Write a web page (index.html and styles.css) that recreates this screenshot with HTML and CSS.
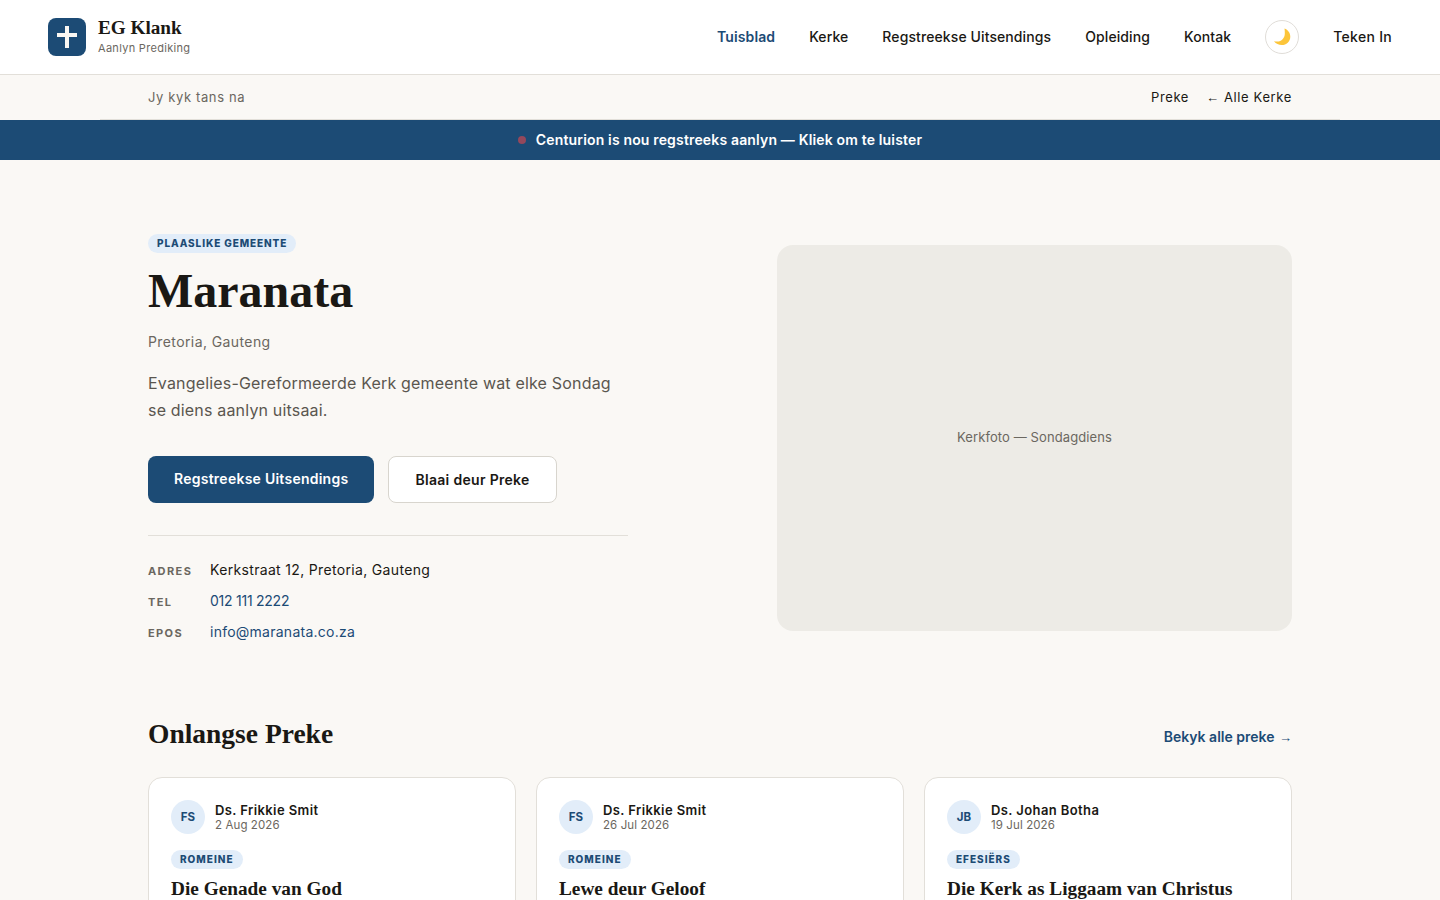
FILE: index.html
```html
<!DOCTYPE html>
<html lang="af">
<head>
  <meta charset="UTF-8">
  <meta name="viewport" content="width=device-width, initial-scale=1.0">
  <title>EG Klank - Maranata</title>
  <link rel="stylesheet" href="styles.css">
</head>
<body>

<header class="site-header">
  <a class="brand" href="#">
    <span class="brand-mark">
      <svg width="22" height="24" viewBox="0 0 22 24"><path d="M9 1h4v7h8v4h-8v11H9V12H1V8h8z" fill="#f9f7f3"/></svg>
    </span>
    <span class="brand-text">
      <span class="brand-name">EG Klank</span>
      <span class="brand-sub">Aanlyn Prediking</span>
    </span>
  </a>
  <nav class="main-nav">
    <a class="active" href="#">Tuisblad</a>
    <a href="#">Kerke</a>
    <a href="#">Regstreekse Uitsendings</a>
    <a href="#">Opleiding</a>
    <a href="#">Kontak</a>
    <button class="theme-btn" type="button" aria-label="Donker modus">
      <svg width="18" height="18" viewBox="0 0 18 18"><path d="M11.500 0.500C15 1.800 17.300 5 17.300 8.700C17.300 13.500 13.400 17 8.800 17C5.800 17 3 15.700 1 13.200C2.200 13.500 3.200 13.600 4.200 13.600C8.500 13.600 11.800 10 11.800 5.800C11.800 4 11.800 2.100 11.500 0.500Z" fill="#fcc53a"/></svg>
    </button>
    <a class="login-link" href="#">Teken In</a>
  </nav>
</header>

<div class="crumb-bar">
  <span class="crumb-label">Jy kyk tans na</span>
  <div class="crumb-links">
    <a href="#">Preke</a>
    <a href="#"><span class="arrow">←</span> Alle Kerke</a>
  </div>
</div>

<a class="live-banner" href="#">
  <span class="live-dot"></span>
  Centurion is nou regstreeks aanlyn — Kliek om te luister
</a>

<main class="content">
  <section class="hero">
    <div class="hero-info">
      <span class="pill pill-wide">PLAASLIKE GEMEENTE</span>
      <h1>Maranata</h1>
      <p class="location">Pretoria, Gauteng</p>
      <p class="intro">Evangelies-Gereformeerde Kerk gemeente wat elke Sondag se diens aanlyn uitsaai.</p>
      <div class="hero-actions">
        <a class="btn btn-primary" href="#">Regstreekse Uitsendings</a>
        <a class="btn btn-outline" href="#">Blaai deur Preke</a>
      </div>
      <dl class="details">
        <div class="detail-row">
          <dt>ADRES</dt>
          <dd>Kerkstraat 12, Pretoria, Gauteng</dd>
        </div>
        <div class="detail-row">
          <dt>TEL</dt>
          <dd><a class="phone" href="#">012 111 2222</a></dd>
        </div>
        <div class="detail-row">
          <dt>EPOS</dt>
          <dd><a href="#">info@maranata.co.za</a></dd>
        </div>
      </dl>
    </div>
    <div class="hero-photo">Kerkfoto — Sondagdiens</div>
  </section>

  <section class="sermons">
    <div class="section-head">
      <h2>Onlangse Preke</h2>
      <a href="#">Bekyk alle preke <span class="arrow">→</span></a>
    </div>
    <div class="sermon-grid">
      <article class="sermon-card">
        <div class="preacher">
          <span class="avatar">FS</span>
          <div>
            <div class="preacher-name">Ds. Frikkie Smit</div>
            <div class="sermon-date">2 Aug 2026</div>
          </div>
        </div>
        <span class="pill">ROMEINE</span>
        <h3>Die Genade van God</h3>
      </article>
      <article class="sermon-card">
        <div class="preacher">
          <span class="avatar">FS</span>
          <div>
            <div class="preacher-name">Ds. Frikkie Smit</div>
            <div class="sermon-date">26 Jul 2026</div>
          </div>
        </div>
        <span class="pill">ROMEINE</span>
        <h3>Lewe deur Geloof</h3>
      </article>
      <article class="sermon-card">
        <div class="preacher">
          <span class="avatar">JB</span>
          <div>
            <div class="preacher-name">Ds. Johan Botha</div>
            <div class="sermon-date">19 Jul 2026</div>
          </div>
        </div>
        <span class="pill">EFESIËRS</span>
        <h3>Die Kerk as Liggaam van Christus</h3>
      </article>
    </div>
  </section>
</main>

</body>
</html>
```

FILE: styles.css
```css
html, body {
  height: 900px;
  overflow: hidden;
}
body {
  margin: 0;
  background-color: #faf8f5;
  color: #1a1814;
  font-family: "Inter", "Open Sans", sans-serif;
}
a {
  color: inherit;
  text-decoration: none;
}

/* header */
.site-header {
  display: flex;
  justify-content: space-between;
  align-items: center;
  height: 74px;
  padding: 0 48px;
  background-color: #fff;
  border-bottom: 1px solid #e2dfd9;
}
.brand {
  display: flex;
  align-items: center;
  gap: 12px;
}
.brand-mark {
  display: flex;
  justify-content: center;
  align-items: center;
  width: 38px;
  height: 38px;
  border-radius: 8px;
  background-color: #1c4b75;
}
.brand-text {
  display: flex;
  flex-direction: column;
  margin-top: -2px;
}
.brand-name {
  font-family: "Liberation Serif", serif;
  font-size: 19.200px;
  font-weight: bold;
  line-height: 24px;
}
.brand-sub {
  padding-top: 1px;
  font-size: 11px;
  line-height: 15px;
  letter-spacing: 0.3px;
  color: #6b6760;
}
.main-nav {
  display: flex;
  align-items: center;
  gap: 34px;
  font-size: 14px;
  font-weight: 500;
  letter-spacing: 0.1px;
}
.main-nav a {
  margin-top: -2px;
}
.main-nav .active {
  color: #1c4b75;
  font-weight: 600;
}
.main-nav .login-link {
  letter-spacing: 0.3px;
}
.theme-btn {
  display: flex;
  justify-content: center;
  align-items: center;
  width: 34px;
  height: 34px;
  padding: 0;
  background-color: #fff;
  border: 1px solid #e0ddd8;
  border-radius: 50%;
}

/* breadcrumb */
.crumb-bar {
  display: flex;
  justify-content: space-between;
  align-items: center;
  height: 44px;
  margin: 0 100px;
  padding: 0 48px;
  border-bottom: 1px solid #e2dfd9;
  font-size: 13px;
  letter-spacing: 0.62px;
}
.crumb-label {
  color: #6b6760;
}
.crumb-links {
  display: flex;
  gap: 17px;
}
.arrow {
  font-family: "Liberation Sans", sans-serif;
  font-size: 13px;
  font-weight: normal;
}

/* live banner */
.live-banner {
  display: flex;
  justify-content: center;
  align-items: center;
  gap: 10px;
  box-sizing: border-box;
  height: 40px;
  padding-bottom: 2px;
  background-color: #1c4b75;
  color: #fff;
  font-size: 14px;
  font-weight: 600;
  letter-spacing: 0.16px;
}
.live-dot {
  width: 8px;
  height: 8px;
  margin-top: 2px;
  border-radius: 50%;
  background-color: #94485c;
}

/* hero */
.content {
  width: 1144px;
  margin: 0 auto;
}
.hero {
  display: grid;
  grid-template-columns: 565px 515px;
  gap: 64px;
  padding-top: 74px;
}
.hero-info {
  max-width: 480px;
}
.pill {
  display: block;
  width: fit-content;
  padding: 0 9px;
  border-radius: 10px;
  background-color: #e2edf9;
  color: #1c4b75;
  font-size: 10px;
  font-weight: 800;
  line-height: 19px;
  letter-spacing: 1px;
}
.pill-wide {
  letter-spacing: 0.9px;
}
h1 {
  margin: 9px 0 0;
  font-family: "Liberation Serif", serif;
  font-size: 48px;
  font-weight: bold;
  line-height: 58px;
}
.location {
  margin: 12px 0 0;
  font-size: 14px;
  line-height: 20px;
  letter-spacing: 0.4px;
  color: #6b6760;
}
.intro {
  margin: 18px 0 0;
  font-size: 16px;
  line-height: 27px;
  letter-spacing: 0.18px;
  color: #5a564f;
}
.hero-actions {
  display: flex;
  gap: 14px;
  margin-top: 32px;
}
.btn {
  display: flex;
  align-items: center;
  box-sizing: border-box;
  height: 47px;
  border-radius: 8px;
  font-size: 14px;
  font-weight: 600;
}
.btn-primary {
  padding: 0 26px 3px;
  background-color: #1c4b75;
  color: #fff;
  letter-spacing: 0.25px;
}
.btn-outline {
  padding: 0 26px 1px;
  background-color: #fff;
  border: 1px solid #d8d5ce;
  letter-spacing: 0.31px;
}
.details {
  margin: 32px 0 0;
  padding-top: 18px;
  border-top: 1px solid #e2dfd9;
}
.detail-row {
  display: flex;
  align-items: center;
  height: 31px;
}
.detail-row dt {
  width: 62px;
  padding-top: 2px;
  font-size: 11px;
  font-weight: 700;
  letter-spacing: 1.400px;
  color: #6b6760;
}
.detail-row dd {
  margin: 0;
  font-size: 14px;
  letter-spacing: 0.33px;
}
.detail-row dd a {
  color: #1c4b75;
  letter-spacing: 0.25px;
}
.detail-row dd .phone {
  letter-spacing: -0.25px;
}
.hero-photo {
  display: flex;
  justify-content: center;
  align-items: center;
  box-sizing: border-box;
  height: 386px;
  margin-top: 11px;
  padding-bottom: 2px;
  border-radius: 16px;
  background-color: #edebe6;
  color: #6b6760;
  font-size: 13px;
  letter-spacing: 0.1px;
}

/* recent sermons */
.sermons {
  margin-top: 68px;
}
.section-head {
  display: flex;
  justify-content: space-between;
  align-items: center;
  height: 36px;
  margin-bottom: 26px;
}
.section-head h2 {
  margin: 0;
  padding-top: 2px;
  font-family: "Liberation Serif", serif;
  font-size: 27.500px;
  font-weight: bold;
}
.section-head a {
  margin-top: 6px;
  color: #1c4b75;
  font-size: 14px;
  font-weight: 600;
}
.section-head .arrow {
  margin-left: 1px;
}
.sermon-grid {
  display: grid;
  grid-template-columns: repeat(3, 368px);
  gap: 20px;
}
.sermon-card {
  padding: 22px;
  background-color: #fff;
  border: 1px solid #e2dfd9;
  border-radius: 14px;
}
.preacher {
  display: flex;
  align-items: center;
  gap: 10px;
  margin-bottom: 16px;
}
.avatar {
  display: flex;
  justify-content: center;
  align-items: center;
  width: 34px;
  height: 34px;
  border-radius: 50%;
  background-color: #e2edf9;
  color: #1c4b75;
  font-size: 11.500px;
  font-weight: 700;
}
.preacher-name {
  font-size: 13px;
  font-weight: 600;
  line-height: 16px;
  letter-spacing: 0.4px;
}
.sermon-date {
  font-size: 11.500px;
  line-height: 15px;
  letter-spacing: 0.1px;
  color: #6b6760;
}
.sermon-card h3 {
  margin: 8px 0 0;
  font-family: "Liberation Serif", serif;
  font-size: 19.300px;
  font-weight: bold;
  line-height: 24px;
}
```
